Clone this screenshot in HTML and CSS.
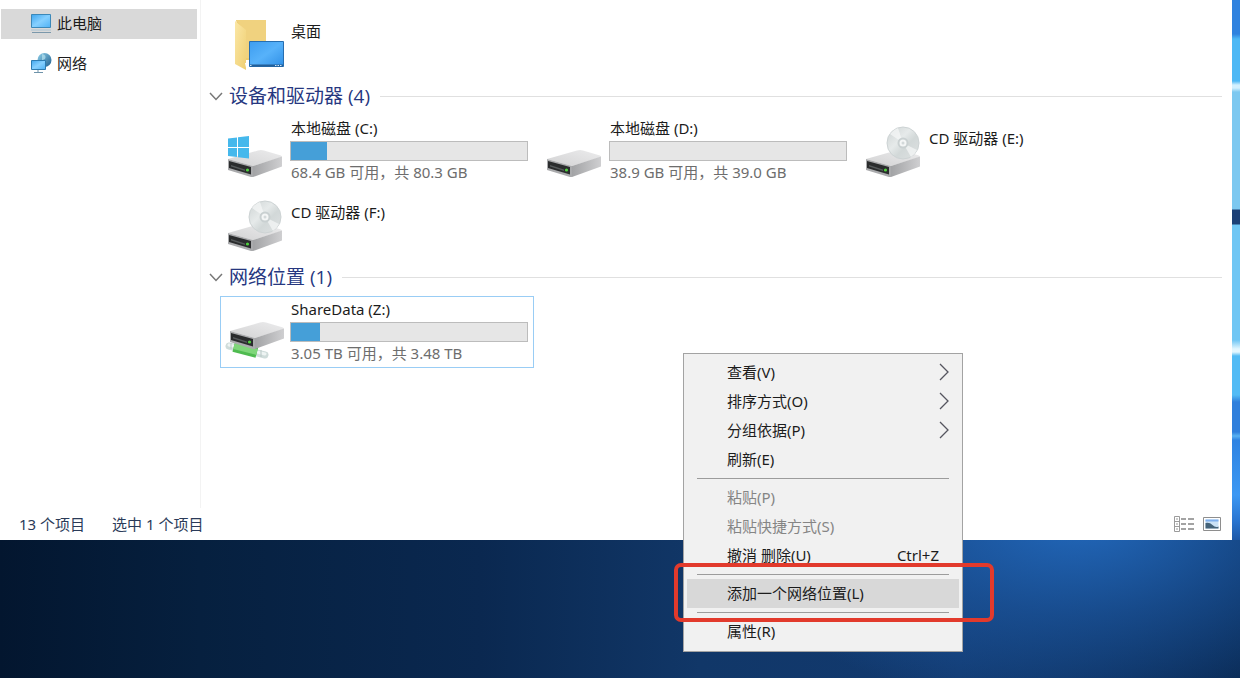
FILE: index.html
```
<!DOCTYPE html>
<html lang="zh-CN">
<head>
<meta charset="utf-8">
<meta name="viewport" content="width=device-width, initial-scale=1">
<title>此电脑</title>
<link rel="stylesheet" href="styles.css">
</head>
<body>
<svg class="defs" aria-hidden="true">
  <defs>
    <linearGradient id="top" x1="0" y1="1" x2="1" y2="0"><stop offset="0" stop-color="#d2d2d3"/><stop offset="1" stop-color="#ececed"/></linearGradient>
    <linearGradient id="side" x1="0" y1="0" x2="1" y2="0"><stop offset="0" stop-color="#a2a3a5"/><stop offset="1" stop-color="#cfcfd1"/></linearGradient>
    <linearGradient id="screen" x1="0" y1="0" x2="1" y2="1"><stop offset="0" stop-color="#3d9df0"/><stop offset=".5" stop-color="#57b2fa"/><stop offset="1" stop-color="#2f8fe6"/></linearGradient>
    <linearGradient id="pc" x1="0" y1="0" x2="1" y2="1"><stop offset="0" stop-color="#3fa6ee"/><stop offset=".5" stop-color="#86d0ff"/><stop offset="1" stop-color="#4fb2f5"/></linearGradient>
    <linearGradient id="folder" x1="0" y1="0" x2="1" y2="1"><stop offset="0" stop-color="#fbe7a6"/><stop offset="1" stop-color="#efcf72"/></linearGradient>
    <linearGradient id="disc" x1="0" y1="0" x2="1" y2="1"><stop offset="0" stop-color="#cdd3d3"/><stop offset=".4" stop-color="#e6eaea"/><stop offset=".6" stop-color="#d2d8d8"/><stop offset="1" stop-color="#dfe2e3"/></linearGradient>
    <linearGradient id="globe" x1="0" y1="0" x2="1" y2="1"><stop offset="0" stop-color="#8fd0ea"/><stop offset="1" stop-color="#1f5f8f"/></linearGradient>
    <g id="drive">
      <path d="M1 36 31 27.500Q34 26.500 37 27.500L54 32.500 55 34 26 43Z" fill="url(#top)"/>
      <path d="M26 43 55 33.500V43.500L26 54Z" fill="url(#side)"/>
      <path d="M1 36 26 43V54L24 54 1 47Z" fill="#aaabad"/>
      <path d="M2 38 24 44V51.500L2 45Z" fill="#2a2c2d"/>
      <path d="M4 42 18 46.500V48L4 43.500Z" fill="#55595a"/>
      <circle cx="20.500" cy="47" r="1.600" fill="#4fd13e"/>
    </g>
    <g id="cd">
      <use href="#drive"/>
      <circle cx="38" cy="20" r="16" fill="url(#disc)" stroke="#cdd3d4"/>
      <path d="M38 20 25 11A16 16 0 0 1 33 5ZM38 20 52 27A16 16 0 0 1 46 34Z" fill="#f6f8f8" opacity=".7"/>
      <circle cx="38" cy="20" r="5.500" fill="#c9d0d1"/>
      <circle cx="38" cy="20" r="3.500" fill="#f4f6f6"/>
      <circle cx="38" cy="20" r="1.500" fill="#d3d9da"/>
    </g>
  </defs>
</svg>

<div class="desktop">
  <div class="window">
    <div class="panes">
      <nav class="sidebar" aria-label="导航">
        <a class="nav-item selected" href="#pc-view">
          <svg class="nav-icon" viewBox="0 0 22 22"><path d="M1.500 2.500h19v13h-19z" fill="url(#pc)" stroke="#3c88b8"/><path d="M1 18h20" stroke="#a9c3d3"/><path d="M2 20.500h19" stroke="#7b98ab"/></svg>
          <span>此电脑</span>
        </a>
        <a class="nav-item" href="#network">
          <svg class="nav-icon" viewBox="0 0 22 22"><circle cx="14.500" cy="8" r="7" fill="url(#globe)"/><path d="M12 2q5 1 3 5-4 1-3 5" fill="#b6e3f0" opacity=".7"/><path d="M1.500 8.500h14v9h-14z" fill="url(#pc)" stroke="#2d7cb2"/><path d="M8 18v2M4 20.500h9" stroke="#6e93aa"/></svg>
          <span>网络</span>
        </a>
      </nav>

      <main class="content" id="pc-view">
        <div class="tiles">
          <article class="tile">
            <svg class="tile-icon" viewBox="0 0 56 56"><path d="M9 4h30v40H19z" fill="#edcc72"/><path d="M9 4h30v38H19V16z" fill="#f0d27f"/><path d="M8 5 19 14V54L8 48Z" fill="url(#folder)"/><path d="M18 47h4v5h-3z" fill="#fff"/><path d="M22.500 25.500h34v25h-34z" fill="url(#screen)" stroke="#276eb0"/><path d="M23 49.500h33" stroke="#235f98" stroke-width="2"/><path d="M48 49.500h7M23 49.500h2" stroke="#cfe6f8" stroke-dasharray="1.500 1"/></svg>
            <h3 class="tile-name tile-name-low">桌面</h3>
          </article>
        </div>

        <section>
          <h2 class="group-title">
            <svg class="group-arrow" viewBox="0 0 14 14"><path d="M1 4 7 10.500 13 4"/></svg>
            <span>设备和驱动器 (4)</span>
          </h2>
          <div class="tiles">
            <article class="tile">
              <svg class="tile-icon" viewBox="0 0 56 56"><use href="#drive"/><path d="M1 15.500 10 14.500V24H1ZM11 14.300 22 13V24H11ZM1 25H10V34L1 33ZM11 25H22V35.500L11 34.200Z" fill="#45b8ec"/></svg>
              <div class="tile-body">
                <h3 class="tile-name">本地磁盘 (C:)</h3>
                <div class="usage" role="img" aria-label="已用 15%"><div class="usage-fill" style="width:15.2%"></div></div>
                <p class="tile-info">68.4 GB 可用，共 80.3 GB</p>
              </div>
            </article>
            <article class="tile">
              <svg class="tile-icon" viewBox="0 0 56 56"><use href="#drive"/></svg>
              <div class="tile-body">
                <h3 class="tile-name">本地磁盘 (D:)</h3>
                <div class="usage" role="img" aria-label="已用 0%"></div>
                <p class="tile-info">38.9 GB 可用，共 39.0 GB</p>
              </div>
            </article>
            <article class="tile">
              <svg class="tile-icon" viewBox="0 0 56 56"><use href="#cd"/></svg>
              <h3 class="tile-name tile-name-low">CD 驱动器 (E:)</h3>
            </article>
            <article class="tile">
              <svg class="tile-icon" viewBox="0 0 56 56"><use href="#cd"/></svg>
              <h3 class="tile-name tile-name-low">CD 驱动器 (F:)</h3>
            </article>
          </div>
        </section>

        <section id="network">
          <h2 class="group-title">
            <svg class="group-arrow" viewBox="0 0 14 14"><path d="M1 4 7 10.500 13 4"/></svg>
            <span>网络位置 (1)</span>
          </h2>
          <div class="tiles">
            <article class="tile tile-selected">
              <svg class="tile-icon" viewBox="0 0 56 56"><path d="M2 42 38 51" stroke="#cfdcda" stroke-width="7" stroke-linecap="round"/><path d="M2 41 38 50" stroke="#eef4f3" stroke-width="3" stroke-linecap="round"/><path d="M7 42 30 48" stroke="#4fbb50" stroke-width="12"/><path d="M7 42 30 48" stroke="#7fd67a" stroke-width="6"/><path d="M34 46V53M4 39V45" stroke="#b8c7c5"/><use href="#drive" x="2" y="-9"/></svg>
              <div class="tile-body">
                <h3 class="tile-name">ShareData (Z:)</h3>
                <div class="usage" role="img" aria-label="已用 12%"><div class="usage-fill" style="width:12.1%"></div></div>
                <p class="tile-info">3.05 TB 可用，共 3.48 TB</p>
              </div>
            </article>
          </div>
        </section>
      </main>
    </div>

    <footer class="statusbar">
      <span>13 个项目</span>
      <span>选中 1 个项目</span>
      <div class="view-modes">
        <button class="view-button" type="button" aria-label="详细信息"><svg viewBox="0 0 20 18" width="20" height="18"><path d="M.5 1.500h5v15h-5zM.5 6.500h5M.5 11.500h5" fill="#fff" stroke="#9b9b9b"/><path d="M2 4h2M2 9h2M2 14h2" stroke="#999"/><path d="M7 4h5M14 4h6M7 9h5M14 9h6M7 14h5M14 14h6" stroke="#858585" stroke-width="1.500"/></svg></button>
        <button class="view-button" type="button" aria-label="大图标"><svg viewBox="0 0 18 14" width="18" height="14"><path d="M.5.500h17v13H.5z" fill="#fff" stroke="#8e8e8e"/><path d="M2.500 2.500h13v9h-13z" fill="#cbe2f6"/><path d="M2.500 2.500h13v2h-13z" fill="#7fb0ee"/><path d="M2.500 6q4-1 7 2t6 1.500v2h-13z" fill="#45647a"/></svg></button>
      </div>
    </footer>
  </div>

  <div class="context-menu" role="menu">
    <button class="menu-item" type="button" role="menuitem">查看(V)<svg class="menu-arrow" viewBox="0 0 10 18"><path d="M1 1 9 9 1 17"/></svg></button>
    <button class="menu-item" type="button" role="menuitem">排序方式(O)<svg class="menu-arrow" viewBox="0 0 10 18"><path d="M1 1 9 9 1 17"/></svg></button>
    <button class="menu-item" type="button" role="menuitem">分组依据(P)<svg class="menu-arrow" viewBox="0 0 10 18"><path d="M1 1 9 9 1 17"/></svg></button>
    <button class="menu-item" type="button" role="menuitem">刷新(E)</button>
    <hr class="menu-line">
    <button class="menu-item" type="button" role="menuitem" disabled>粘贴(P)</button>
    <button class="menu-item" type="button" role="menuitem" disabled>粘贴快捷方式(S)</button>
    <button class="menu-item" type="button" role="menuitem">撤消 删除(U)<span class="shortcut">Ctrl+Z</span></button>
    <hr class="menu-line">
    <button class="menu-item menu-item-active" type="button" role="menuitem">添加一个网络位置(L)</button>
    <hr class="menu-line">
    <button class="menu-item" type="button" role="menuitem">属性(R)</button>
  </div>
  <div class="callout"></div>
</div>
</body>
</html>
```
FILE: styles.css
```
* {
  box-sizing: border-box;
}

body {
  margin: 0;
  font: 15px/20px "Noto Sans", "Noto Sans CJK SC", sans-serif;
  color: #1c1c1c;
}

h2, h3, p {
  margin: 0;
  font-weight: 400;
}

button {
  border: 0;
  padding: 0;
  background: none;
  color: inherit;
  font: inherit;
  text-align: left;
}

.defs {
  position: absolute;
  width: 0;
  height: 0;
}

.desktop {
  position: relative;
  min-height: 100vh;
  padding-right: 8px;
  background:
    linear-gradient(#2f82df 0 34px, #4db8f5 39px 81px, #d3f1ff 85px 88px, #7cc8f0 92px 209px, #1c4076 210px 224px, #6fc6f4 225px 340px, #e4f7ff 349px 352px, #52bbf5 356px 395px, #2f7fdc 402px 432px, #58b1f2 436px, #2f83e2 440px, #3c98f3 495px, #2a76d2 520px, #1d58a8 540px) right top / 8px 540px no-repeat,
    radial-gradient(ellipse 360px 190px at 1080px 520px, #2268bb 0%, rgba(31, 95, 174, .55) 50%, rgba(31, 95, 174, 0) 100%),
    linear-gradient(90deg, #03162f 0, #06203f 200px, #0a2850 480px, #113768 700px, #123a70 960px, #0a2a54 100%);
}

.window {
  display: flex;
  flex-direction: column;
  min-height: 540px;
  background: #fff;
}

.panes {
  display: flex;
  flex: 1;
}

.sidebar {
  display: flex;
  flex-direction: column;
  flex: 0 0 201px;
  gap: 10px;
  padding: 9px 3px 0 1px;
  border-right: 1px solid #f3f3f3;
}

.nav-item {
  display: flex;
  align-items: center;
  gap: 5px;
  height: 30px;
  padding: 0 0 2px 29px;
  color: inherit;
  text-decoration: none;
}

.selected {
  background: #d9d9d9;
}

.nav-icon {
  width: 22px;
  height: 22px;
}

.content {
  flex: 1;
  padding: 8px 10px 0 8px;
}

.tiles {
  display: grid;
  grid-template-columns: repeat(auto-fill, 314px);
  gap: 2px 5px;
  padding-left: 11px;
}

.tile {
  display: flex;
  gap: 7px;
  height: 72px;
  padding: 2px 5px 2px 6px;
  border: 1px solid transparent;
}

.tile-selected {
  border-color: #99cdf5;
}

.tile-icon {
  flex: none;
  width: 56px;
  height: 56px;
  margin-top: 5px;
  overflow: visible;
}

.tile-body {
  flex: 1;
}

.tile-name {
  padding-left: 1px;
  font-size: 15px;
}

.tile-name-low {
  padding-top: 10px;
}

.usage {
  height: 20px;
  margin: 3px 0 1px;
  border: 1px solid #bcbcbc;
  background: #e6e6e6;
}

.usage-fill {
  height: 100%;
  background: #459fd8;
}

.tile-info {
  padding-left: 1px;
  color: #6d6d6d;
}

.group-title {
  display: flex;
  align-items: center;
  gap: 6px;
  height: 32px;
  margin-bottom: 3px;
  color: #26377f;
  font-family: "Open Sans", "Noto Sans CJK SC", sans-serif;
  font-size: 19px;
}

.group-title::after {
  content: "";
  flex: 1;
  height: 1px;
  margin-left: 4px;
  background: #e0e0e0;
}

.group-arrow {
  width: 14px;
  height: 14px;
  fill: none;
  stroke: #777;
  stroke-width: 1.5;
}

.statusbar {
  display: flex;
  align-items: center;
  gap: 27px;
  height: 32px;
  padding: 0 11px 0 19px;
  color: #2b3b59;
}

.view-modes {
  display: flex;
  align-items: center;
  gap: 9px;
  margin-left: auto;
}

.view-button {
  display: flex;
}

.context-menu {
  position: absolute;
  left: 683px;
  top: 353px;
  width: 280px;
  padding: 4px 3px 5px;
  border: 1px solid #a3a3a3;
  background: #f1f1f1;
}

.menu-item {
  display: flex;
  align-items: center;
  width: 100%;
  height: 29px;
  padding: 0 10px 1px 40px;
}

.menu-item:disabled {
  color: #858585;
}

.menu-item-active {
  background: #d8d8d8;
}

.menu-arrow {
  width: 10px;
  height: 18px;
  margin-left: auto;
  fill: none;
  stroke: #55555f;
  stroke-width: 1.3;
}

.shortcut {
  margin-left: auto;
  padding-right: 10px;
}

.menu-line {
  height: 1px;
  margin: 4px 10px;
  border: 0;
  background: #9c9c9c;
}

.callout {
  position: absolute;
  left: 674px;
  top: 563px;
  width: 320px;
  height: 59px;
  border: 4px solid #e23a2c;
  border-radius: 7px;
  pointer-events: none;
}
```
